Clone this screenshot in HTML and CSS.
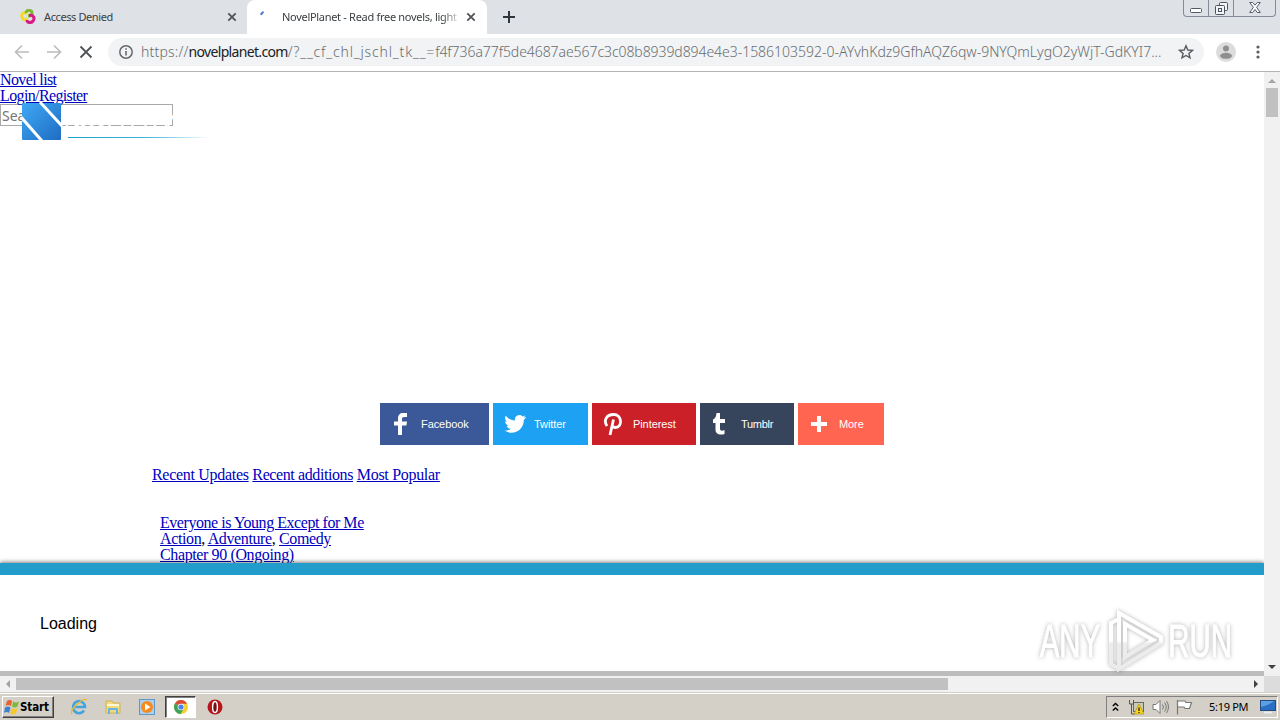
FILE: index.html
```html
<!DOCTYPE html>
<html lang="en">
<head>
    <meta charset="UTF-8">
    <meta name="viewport" content="width=device-width, initial-scale=1.0">
    <title>NovelPlanet - Read free novels, light novels</title>
    <link rel="stylesheet" href="styles.css">
</head>
<body>

    <!-- Browser tabs -->
    <header class="tab-strip">
        <div class="tab">
            <svg class="favicon" width="16" height="16" viewBox="0 0 16 16" fill="none" stroke-width="3">
                <path d="M7 5C4 2 1 5 2 8s3 4 5 1" stroke="#f2dc28"/>
                <path d="M6 4c0-4 6-3 6 0 0 2-2 3-4 3" stroke="#7fb92c"/>
                <path d="M9 6.500c5-1 6 3 4 5.500-2 2.500-6 2-6-1" stroke="#d81b84"/>
            </svg>
            <span class="tab-title denied">Access Denied</span>
            <svg class="close" width="10" height="10" viewBox="0 0 10 10"><path d="M1.3 1.3l7.4 7.4M8.7 1.3L1.3 8.7"/></svg>
        </div>
        <div class="tab active">
            <svg class="favicon" width="16" height="16" viewBox="0 0 16 16"><path d="M1.8 5.8Q3 3.5 4.6 2.8" fill="none" stroke="#4a77d4" stroke-width="2"/></svg>
            <span class="tab-title novel">NovelPlanet - Read free novels, light</span>
            <svg class="close" width="10" height="10" viewBox="0 0 10 10"><path d="M1.3 1.3l7.4 7.4M8.7 1.3L1.3 8.7"/></svg>
        </div>
        <svg class="new-tab" width="12" height="12" viewBox="0 0 12 12"><path d="M6 0v12M0 6h12" stroke="#30343b" stroke-width="2"/></svg>
        <div class="window-buttons">
            <span class="win-btn"><svg width="12" height="5" viewBox="0 0 12 5"><rect x=".5" y=".5" width="11" height="4" rx="1" fill="#fff" stroke="#555b66"/></svg></span>
            <span class="win-btn restore"><svg width="13" height="13" viewBox="0 0 13 13" fill="#f3f4f6" stroke="#4c525e"><rect x="4.5" y=".5" width="8" height="8" rx="1"/><rect x=".5" y="3.5" width="9" height="9" rx="1"/><rect x="3.5" y="6.5" width="3" height="3"/></svg></span>
            <span class="win-btn exit"><svg width="12" height="11" viewBox="0 0 12 11"><path d="M.7.5h3L6 3.2 8.3.5h3L7.6 5.3l3.7 5.2h-3L6 7.5l-2.3 3h-3l3.7-5.2z" fill="#fff" stroke="#555b66"/></svg></span>
        </div>
    </header>

    <!-- Address bar -->
    <div class="toolbar">
        <svg class="nav-icon" width="16" height="16" viewBox="0 0 16 16"><path d="M15 8H2M8 1.5L1.5 8 8 14.5" fill="none" stroke="#bcbcbc" stroke-width="1.6"/></svg>
        <svg class="nav-icon" width="16" height="16" viewBox="0 0 16 16"><path d="M1 8h13M8 1.5L14.5 8 8 14.5" fill="none" stroke="#bcbcbc" stroke-width="1.6"/></svg>
        <svg class="nav-icon" width="16" height="16" viewBox="0 0 16 16"><path d="M2.5 2.5l11 11M13.5 2.5l-11 11" stroke="#505357" stroke-width="1.8"/></svg>
        <div class="address">
            <svg width="14" height="14" viewBox="0 0 14 14"><circle cx="7" cy="7" r="6.2" fill="none" stroke="#65696e" stroke-width="1.5"/><path d="M7 6v4.5M7 3.3v1.5" stroke="#65696e" stroke-width="1.6"/></svg>
            <span class="url"><span class="scheme">https://</span><b>novelplanet.com</b><span class="query">/?__cf_chl_jschl_tk__=</span><span class="hash">f4f736a77f5de4687ae567c3c08b8939d894e4e3</span>-1586103592-0-AYvhKdz9GfhAQZ6qw-9NYQmLygO2yWjT-GdKYI7...</span>
            <svg class="star" width="16" height="16" viewBox="0 0 16 16"><path d="M8 1.8l1.8 4.2 4.6.4-3.5 3 1.1 4.5L8 11.5l-4 2.4 1.1-4.5-3.500-3 4.600-.4z" fill="none" stroke="#585c61" stroke-width="1.4"/></svg>
        </div>
        <svg class="avatar" width="20" height="20" viewBox="0 0 20 20"><circle cx="10" cy="10" r="10" fill="#dcdcdc"/><circle cx="10" cy="6.5" r="3" fill="#8f8f8f"/><ellipse cx="10" cy="13.8" rx="6" ry="3" fill="#8f8f8f"/></svg>
        <svg class="dots" width="4" height="14" viewBox="0 0 4 14" fill="#5c5f63"><circle cx="2" cy="2" r="1.6"/><circle cx="2" cy="7" r="1.6"/><circle cx="2" cy="12" r="1.6"/></svg>
    </div>

    <div class="viewport">
        <div class="page">
            <div class="top-links">
                <div><a href="#">Novel list</a></div>
                <div><a href="#">Login/Register</a></div>
                <input type="text" class="search" placeholder="Search">
                <svg class="logo" width="200" height="44" viewBox="0 0 200 44">
                    <defs>
                        <linearGradient id="blue" x2="1" y2="1"><stop stop-color="#3fa9f5"/><stop offset="1" stop-color="#1f6cc2"/></linearGradient>
                    </defs>
                    <rect x="2" y="3" width="39" height="37" rx="1" fill="url(#blue)"/>
                    <path d="M20 2l22 24M1 17l21 24" stroke="#fff" stroke-width="3"/>
                    <text x="44" y="28" textLength="142" class="logo-text">NOVELPLANET</text>
                </svg>
                <div class="logo-line"></div>
            </div>

            <div class="share">
                <a class="share-btn facebook"><svg width="20" height="24" viewBox="0 0 20 24"><path d="M7 23V13.500H3V9.500h4V6.500C7 3 9 1 12 1h4v4h-2.500C11.500 5 11 5.800 11 7v2.500h5l-.6 4H11V23z"/></svg><span>Facebook</span></a>
                <a class="share-btn twitter"><svg width="22" height="20" viewBox="0 0 22 20"><path d="M22 3c-.8.4-1.700.6-2.500.7.9-.6 1.500-1.400 1.900-2.400-.9.500-1.800.9-2.800 1.100A4.500 4.500 0 0 0 11 6.500C7.300 6.300 4 4.600 1.700 1.800c-1.100 2-.6 4.500 1.400 5.900-.7 0-1.400-.2-2-.5 0 2.100 1.500 4 3.500 4.400-.6.200-1.300.2-2 .1.600 1.700 2.200 3 4.200 3.100-1.900 1.500-4.200 2.100-6.500 1.800 9 5.500 19.600-.2 19.500-10.700.9-.7 1.600-1.500 2.200-2.400z"/></svg><span>Twitter</span></a>
                <a class="share-btn pinterest"><svg width="20" height="24" viewBox="0 0 20 24"><path d="M4 14C0 8 4 2.500 10.500 2.500c9 0 9 13 2 13-2 0-3-1-3.500-2M10.500 7.500L7 23" fill="none" stroke="#fff" stroke-width="2.800"/></svg><span>Pinterest</span></a>
                <a class="share-btn tumblr"><svg width="14" height="22" viewBox="0 0 14 22"><path d="M4.500 0H8v6h5v4H8v5.500c0 2.500 2 2.600 4.500 1.500v4C7 22.500 3.500 20.500 3.500 17v-7H1V6.500C3.500 5.500 4.200 3 4.500 0z"/></svg><span>Tumblr</span></a>
                <a class="share-btn more"><svg width="16" height="16" viewBox="0 0 16 16"><path d="M6 0h4v6h6v4h-6v6H6v-6H0V6h6z"/></svg><span>More</span></a>
            </div>

            <div class="list-tabs"><a href="#">Recent Updates</a> <a href="#" class="additions">Recent additions</a> <a href="#">Most Popular</a></div>

            <div class="novel-item">
                <div class="novel-name"><a href="#">Everyone is Young Except for Me</a></div>
                <div><a href="#">Action</a>, <a href="#">Adventure</a>, <a href="#">Comedy</a></div>
                <div><a href="#">Chapter 90 (Ongoing)</a></div>
            </div>

            <!-- Loading panel stuck to the bottom -->
            <div class="loading-panel">Loading</div>

            <div class="watermark">
                <span class="mark-text">ANY</span>
                <svg width="56" height="66" viewBox="0 0 56 66">
                    <defs>
                        <linearGradient id="fade" x2="0" y2="1"><stop offset=".5" stop-color="#fff"/><stop offset=".55" stop-color="#ececec"/></linearGradient>
                    </defs>
                    <path d="M12 5l42 24v6L12 61zM18 16v33l28-17zM12 11l-8 4v41l8 5" fill="none" stroke="url(#fade)" stroke-width="4"/>
                </svg>
                <span class="mark-text">RUN</span>
            </div>
        </div>

        <div class="scroll-y">
            <svg width="16" height="16" viewBox="0 0 16 16"><path d="M4 11l4-4 4 4z" fill="#a3a3a3"/></svg>
            <div class="thumb-y"></div>
            <svg class="down" width="16" height="16" viewBox="0 0 16 16"><path d="M4 5h8l-4 4z" fill="#404040"/></svg>
        </div>
    </div>

    <div class="scroll-x">
        <svg width="16" height="16" viewBox="0 0 16 16"><path d="M10 4v8L6 8z" fill="#a3a3a3"/></svg>
        <div class="thumb-x"></div>
        <svg class="right" width="16" height="16" viewBox="0 0 16 16"><path d="M6 4v8l4-4z" fill="#404040"/></svg>
        <div class="corner"></div>
    </div>

    <!-- Windows taskbar -->
    <footer class="taskbar">
        <div class="start">
            <svg width="16" height="16" viewBox="0 0 16 16"><path d="M3 2q3-2 5 0L7 7Q4 5 1.500 7z" fill="#e8602c"/><path d="M9 2.500q3 2 6 0L13.500 7.500q-3 2-5.500 0z" fill="#7dba3c"/><path d="M1 8.500q3-2 5.500 0L5 14q-2.500-2-5 0z" fill="#3b83d1"/><path d="M7.500 9q3 2 6 0L12 14.500q-3 2-6 0z" fill="#f6c72f"/></svg>
            <b>Start</b>
        </div>
        <div class="launch">
            <svg width="18" height="18" viewBox="0 0 18 18" fill="none"><path d="M14 12.500A6 6 0 1 1 15 9H5" stroke="#43a3df" stroke-width="2.600"/><path d="M2 16C-1 12 13-1 17 2" stroke="#e6bd35" stroke-width="1.400"/></svg>
        </div>
        <div class="launch">
            <svg width="18" height="18" viewBox="0 0 18 18"><path d="M2 3h6l1 2h7v10H2z" fill="#f0d980" stroke="#cfb256"/><path d="M3 7h12" stroke="#fff8d5" stroke-width="2"/><path d="M4 16v-5q0-1 1-1h8q1 0 1 1v5h-2v-4H6v4z" fill="#65b5df"/></svg>
        </div>
        <div class="launch">
            <svg width="16" height="16" viewBox="0 0 16 16"><rect x=".5" y=".5" width="15" height="15" fill="#abd0ef" stroke="#5c98ca"/><circle cx="8" cy="8" r="6" fill="#f58b1e"/><path d="M6 4.500v7L11.500 8z" fill="#fff"/></svg>
        </div>
        <div class="launch pressed">
            <svg width="14" height="14" viewBox="0 0 14 14"><circle cx="7" cy="7" r="7" fill="#f8ce2f"/><path d="M7 7L.9 3.500A7 7 0 0 1 13.100 3.800H7z" fill="#d94a37"/><path d="M7 7L.9 3.500A7 7 0 0 0 6.500 14L10 8.500z" fill="#3fa357"/><circle cx="7" cy="7" r="3.300" fill="#fff"/><circle cx="7" cy="7" r="2.600" fill="#4682e8"/></svg>
        </div>
        <div class="launch">
            <svg width="16" height="16" viewBox="0 0 16 16"><circle cx="8" cy="8" r="7.500" fill="#b5161b"/><ellipse cx="8" cy="8" rx="2.400" ry="5.500" fill="#751014" stroke="#fff" stroke-width="1.400"/></svg>
        </div>
        <div class="tray">
            <svg class="chevrons" width="7" height="10" viewBox="0 0 7 10"><path d="M.8 4l2.700-2.500L6.200 4M.8 8.500L3.500 6l2.700 2.500" fill="none" stroke="#000" stroke-width="1.400"/></svg>
            <svg width="16" height="16" viewBox="0 0 16 16"><rect x="5.500" y="3.500" width="10" height="9" fill="#c9cbb6" stroke="#666"/><path d="M1.500 1v4h4V1M3.500 5v10H7" fill="none" stroke="#555"/><path d="M11 5l5 10H6z" fill="#f8d51d" stroke="#b3920f" stroke-width=".7"/><path d="M11 8.500v3.500M11 13v1" stroke="#222" stroke-width="1.300"/></svg>
            <svg class="speaker" width="17" height="16" viewBox="0 0 17 16" fill="none" stroke="#777"><path d="M1 5.500h3l4-4v13l-4-4H1z" fill="#fff"/><path d="M10.500 5.500q2 2.500 0 5M12.500 3.500q3.500 4.500 0 9M14.500 2q4 6 0 12"/></svg>
            <svg class="flag" width="17" height="16" viewBox="0 0 17 16"><path d="M1.500 1v14.500M2 2h7l1 1.500h5.500l-2 6H9L8 8H2" fill="#fff" stroke="#777" stroke-width="1.200"/></svg>
            <span class="clock">5:19 PM</span>
            <svg width="16" height="14" viewBox="0 0 16 14"><rect x=".5" y=".5" width="15" height="10" fill="#2b6fc4" stroke="#244d85"/><path d="M1 7Q8 6 14 1H1z" fill="#5ba0e2"/><path d="M4 12.500h8" stroke="#e8edf2" stroke-width="2"/></svg>
        </div>
    </footer>

</body>
</html>
```

FILE: styles.css
```css
/* General Styles */
* {
    box-sizing: border-box;
}

body {
    margin: 0;
    width: 1280px;
    height: 720px;
    overflow: hidden;
    display: flex;
    flex-direction: column;
    background: #fff;
    font-family: "Liberation Serif", serif;
    font-size: 16px;
    line-height: 16px;
}

svg {
    flex: none;
    display: block;
}

a {
    color: #0000c0;
    text-decoration: underline;
}

/* Browser tabs */
.tab-strip {
    height: 34px;
    flex: none;
    display: flex;
    align-items: center;
    background: #dee1e6;
    font-family: "Noto Sans", sans-serif;
    font-size: 11px;
    color: #3c4043;
}

.tab {
    display: flex;
    align-items: center;
    width: 247px;
    height: 34px;
    padding: 0 10px 0 20px;
}

.tab.active {
    width: 240px;
    padding: 0 11px 0 12px;
    background: #fff;
    border-radius: 8px 8px 0 0;
}

.favicon {
    margin-right: 7px;
}

.tab-title {
    white-space: nowrap;
    letter-spacing: -0.4px;
}

.denied {
    margin-left: 1px;
}

.novel {
    width: 177px;
    letter-spacing: -0.3px;
    -webkit-mask-image: linear-gradient(to right, #000 160px, transparent 180px);
}

.close {
    margin-left: auto;
    stroke: #505357;
    stroke-width: 1.8;
}

.new-tab {
    margin-left: 16px;
}

.window-buttons {
    display: flex;
    align-self: flex-start;
    margin-left: auto;
    margin-right: 4px;
    height: 17px;
    border: 1px solid #858b98;
    border-top: 0;
    border-radius: 0 0 4px 4px;
}

.win-btn {
    display: flex;
    justify-content: center;
    align-items: flex-end;
    width: 24px;
    padding-bottom: 3px;
}

.win-btn.restore {
    width: 26px;
    border-left: 1px solid #858b98;
    border-right: 1px solid #858b98;
    padding-bottom: 1px;
}

.win-btn.exit {
    width: 41px;
}

/* Address bar */
.toolbar {
    height: 38px;
    flex: none;
    display: flex;
    align-items: center;
    padding: 0 20px 1px 14px;
    border-bottom: 1px solid #b2b4b6;
}

.nav-icon {
    margin-right: 16px;
}

.address {
    display: flex;
    align-items: center;
    width: 1096px;
    height: 28px;
    padding: 0 10px 0 11px;
    margin-left: -2px;
    border-radius: 14px;
    background: #f1f3f4;
    font-family: "Noto Sans", sans-serif;
    font-size: 14px;
}

.url {
    margin-left: 8px;
    white-space: nowrap;
    font-weight: 300;
    color: #686d72;
}

.scheme {
    letter-spacing: 0.2px;
}

.url b {
    font-weight: normal;
    letter-spacing: -0.67px;
    color: #202124;
}

.query {
    letter-spacing: 0.85px;
}

.hash {
    letter-spacing: -0.07px;
}

.star {
    margin-left: auto;
}

.avatar {
    margin-left: 12px;
}

.dots {
    margin-left: auto;
}

/* Page content */
.viewport {
    flex: 1;
    min-height: 0;
    display: flex;
}

.page {
    position: relative;
    display: flex;
    flex-direction: column;
    width: 1264px;
    overflow: hidden;
}

.top-links {
    position: relative;
    height: 331px;
    flex: none;
    letter-spacing: -0.63px;
}

.search {
    display: block;
    width: 173px;
    height: 22px;
    padding: 1px;
    border: 1px solid #a9a9a9;
    font-family: "Noto Sans", sans-serif;
    font-size: 14px;
}

.search::placeholder {
    color: #757575;
}

.logo {
    position: absolute;
    top: 28px;
    left: 20px;
}

.logo-text {
    font-family: "Liberation Sans", sans-serif;
    font-size: 23px;
    fill: #fff;
}

.logo-line {
    position: absolute;
    top: 65px;
    left: 68px;
    width: 142px;
    height: 1px;
    background: linear-gradient(to right, #1d9ecb, #3db4dc 55%, #fff);
}

/* Share buttons */
.share {
    display: flex;
    gap: 4px;
    height: 42px;
    flex: none;
    margin-left: 380px;
}

.share-btn {
    display: flex;
    align-items: center;
    color: #fff;
    fill: #fff;
    font-family: "Liberation Sans", sans-serif;
    font-size: 11px;
    letter-spacing: -0.08px;
    text-decoration: none;
}

.facebook {
    width: 109px;
    padding-left: 11px;
    background: #3b5998;
}

.facebook span {
    margin-left: 10px;
}

.twitter {
    width: 95px;
    padding-left: 11px;
    background: #1da1f2;
}

.twitter span {
    margin-left: 8px;
}

.pinterest {
    width: 104px;
    padding-left: 11px;
    background: #cb2027;
}

.pinterest span {
    margin-left: 10px;
}

.tumblr {
    width: 94px;
    padding-left: 12px;
    background: #37455c;
}

.tumblr span {
    margin-left: 15px;
    letter-spacing: -0.3px;
}

.more {
    width: 86px;
    padding-left: 13px;
    background: #ff6550;
}

.more span {
    margin-left: 12px;
}

/* Novel list */
.list-tabs {
    margin: 22px 0 0 152px;
    letter-spacing: -0.3px;
}

.additions {
    letter-spacing: -0.4px;
}

.novel-item {
    margin: 32px 0 0 160px;
    letter-spacing: -0.38px;
}

.novel-name {
    letter-spacing: -0.45px;
}

.loading-panel {
    position: absolute;
    left: 0;
    right: 0;
    bottom: 0;
    height: 113px;
    padding: 41px 40px 0;
    border-top: 12px solid #219ccb;
    border-bottom: 5px solid #bcbcbc;
    background: #fff;
    box-shadow: 0 -1px 4px rgba(0, 0, 0, 0.5);
    font-family: "Liberation Sans", sans-serif;
}

.watermark {
    position: absolute;
    left: 1022px;
    top: 536px;
    display: flex;
    align-items: center;
    filter: drop-shadow(0 0 2px rgba(0, 0, 0, 0.3));
}

.mark-text {
    width: 96px;
    margin-right: -3px;
    text-align: center;
    transform: scaleX(0.64);
    font-family: "Liberation Sans", sans-serif;
    font-size: 46px;
    line-height: 60px;
    color: #fff;
    -webkit-text-stroke: 1px #fff;
}

.watermark svg {
    margin: 0 -12px 0 -8px;
}

/* Scrollbars */
.scroll-y {
    display: flex;
    flex-direction: column;
    width: 16px;
    background: #f1f1f1;
}

.thumb-y {
    height: 29px;
    margin: 0 2px;
    background: #c1c1c1;
}

.down {
    margin-top: auto;
}

.scroll-x {
    display: flex;
    align-items: center;
    height: 16px;
    flex: none;
    background: #f1f1f1;
}

.thumb-x {
    width: 932px;
    height: 12px;
    background: #c1c1c1;
}

.right {
    margin-left: auto;
}

.corner {
    width: 16px;
    height: 16px;
    background: #dcdcdc;
}

/* Taskbar */
.taskbar {
    display: flex;
    align-items: center;
    height: 28px;
    flex: none;
    padding: 2px 2px 1px;
    background: #d4d0c8;
    border-top: 1px solid #d4d0c8;
    box-shadow: inset 0 1px #fff;
    font-family: "DejaVu Sans", sans-serif;
    font-size: 11px;
}

.start {
    display: flex;
    align-items: center;
    width: 52px;
    height: 22px;
    margin-right: 9px;
    padding-left: 1px;
    border: 1px solid;
    border-color: #fff #404040 #404040 #fff;
    box-shadow: inset -1px -1px #808080;
}

.start b {
    font-family: "DejaVu Sans Condensed", "DejaVu Sans", sans-serif;
    font-size: 11.5px;
    letter-spacing: -0.1px;
}

.launch {
    display: flex;
    align-items: center;
    justify-content: center;
    width: 31px;
    height: 22px;
    margin-right: 3px;
}

.launch.pressed {
    background: #fff;
    border: 1px solid;
    border-color: #404040 #fff #fff #404040;
    box-shadow: inset 1px 1px #808080;
}

.tray {
    display: flex;
    align-items: center;
    width: 172px;
    height: 22px;
    margin-left: auto;
    padding: 0 1px 0 5px;
    border: 1px solid;
    border-color: #808080 #fff #fff #808080;
}

.tray svg:last-child {
    margin-left: auto;
}

.chevrons {
    margin-right: 9px;
}

.speaker {
    margin-left: 8px;
}

.flag {
    margin-left: 7px;
}

.clock {
    margin-left: 16px;
    white-space: nowrap;
    font-family: "Noto Sans", sans-serif;
    letter-spacing: -0.3px;
}
```
